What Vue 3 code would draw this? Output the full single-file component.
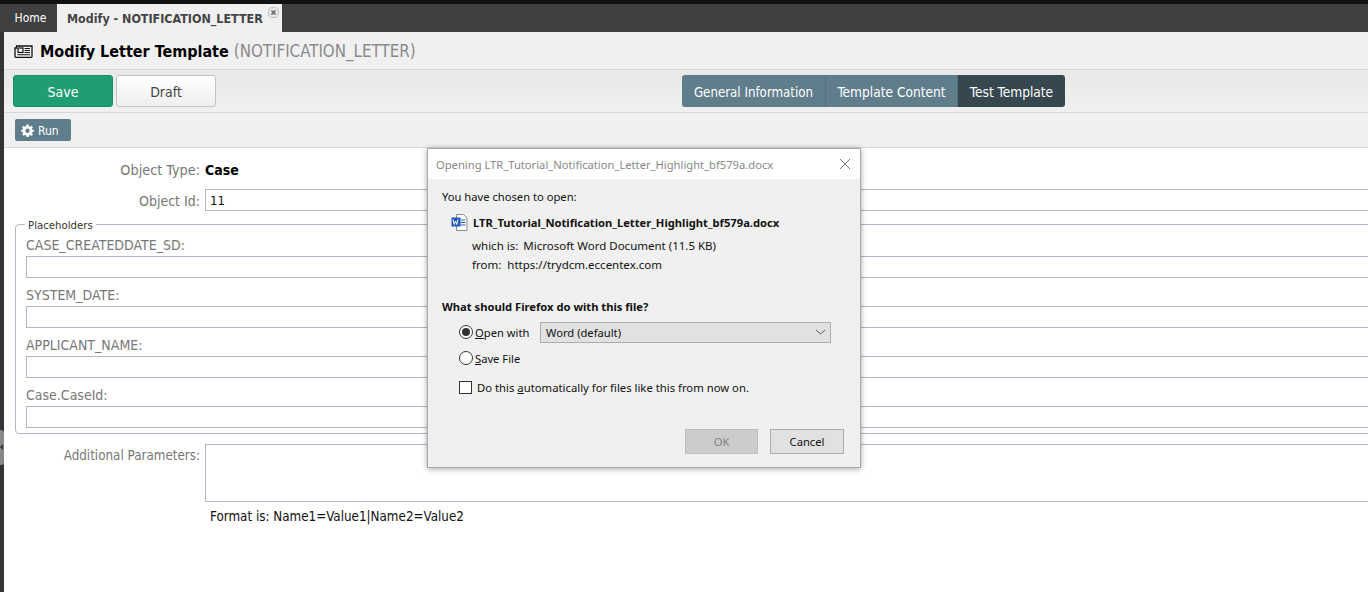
<template>
  <div class="page">
    <div class="tabs">
      <div class="tab home">Home</div>
      <div class="tab active">
        <span>Modify - NOTIFICATION_LETTER</span>
        <svg class="tab_close" width="11" height="11" viewBox="0 0 11 11">
          <rect x="0.5" y="0.5" width="10" height="10" rx="3" fill="#e4e4e4" stroke="#c4c4c4" />
          <path d="M3.500 3.500l4 4M7.500 3.500l-4 4" stroke="#666" stroke-width="1.500" />
        </svg>
      </div>
    </div>
    <div class="main">
      <div class="head">
        <svg class="head_icon" width="19" height="13" viewBox="0 0 19 13">
          <path d="M2.500 1h15.500v10.500a.8.8 0 0 1-.8.8H1.800a.8.8 0 0 1-.8-.8V3h1.500z" fill="#f4f4f4" stroke="#111" stroke-width="1.300" />
          <rect x="4" y="3" width="5" height="4.500" fill="none" stroke="#111" stroke-width="1.200" />
          <path d="M10.500 3.500h5.500M10.500 5.500h5.500M10.500 7.500h5.500M3.500 9.800h12.500" stroke="#111" stroke-width="1.100" />
        </svg>
        <span class="head_title">Modify Letter Template</span>
        <span class="head_sub">(NOTIFICATION_LETTER)</span>
      </div>
      <div class="toolbar">
        <div class="actions">
          <div class="btn save">Save</div>
          <div class="btn draft">Draft</div>
        </div>
        <div class="steps">
          <div class="step" style="width: 144px">General Information</div>
          <div class="step" style="width: 132px">Template Content</div>
          <div class="step current" style="width: 107px">Test Template</div>
        </div>
      </div>
      <div class="runbar">
        <div class="run">
          <svg width="13" height="13" viewBox="0 0 24 24">
            <path fill-rule="evenodd" fill="#fff" d="M10 1h4l.6 3.100 2 .8 2.600-1.800 2.800 2.800-1.800 2.600.8 2L24 11v3l-3 .6-.8 2 1.800 2.600-2.800 2.800-2.600-1.800-2 .8L14 24h-4l-.6-3.100-2-.8-2.600 1.800L2 19.100l1.800-2.600-.8-2L0 14v-3l3-.6.8-2L2 5.900 4.800 3.100l2.600 1.800 2-.8zM12 8.500a4 4 0 1 0 0 8 4 4 0 0 0 0-8z" />
          </svg>
          <span>Run</span>
        </div>
      </div>
      <div class="content">
        <div class="row type_row">
          <div class="label type_label">Object Type:</div>
          <div class="type_value">Case</div>
        </div>
        <div class="row">
          <div class="label id_label">Object Id:</div>
          <div class="input id_input">11</div>
        </div>
        <div class="fieldset">
          <div class="legend">Placeholders</div>
          <div v-for="name in placeholders" :key="name" class="field">
            <div class="field_label">{{ name }}:</div>
            <div class="input"></div>
          </div>
        </div>
        <div class="row params_row">
          <div class="label params_label">Additional Parameters:</div>
          <div class="params">
            <div class="input textarea"></div>
            <div class="hint">Format is: Name1=Value1|Name2=Value2</div>
          </div>
        </div>
      </div>
      <div class="splitter">
        <div class="grip"></div>
      </div>
    </div>

    <div class="dialog">
      <div class="dialog_title">
        <span>Opening LTR_Tutorial_Notification_Letter_Highlight_bf579a.docx</span>
        <svg width="12" height="12" viewBox="0 0 12 12">
          <path d="M1 1l10 10M11 1L1 11" stroke="#777" stroke-width="1" />
        </svg>
      </div>
      <div class="dialog_body">
        <div class="chosen">You have chosen to open:</div>
        <div class="file">
          <svg width="17" height="17" viewBox="0 0 17 17">
            <path d="M5.500 0.500h7l3.500 3.500v12.500h-10.500z" fill="#fff" stroke="#8a8a8a" />
            <path d="M9.500 6h5M9.500 8.500h5M9.500 11h5" stroke="#2b5cb8" stroke-width="1" />
            <rect x="0.500" y="3.500" width="9" height="9" fill="#1f56c0" />
            <path d="M2 5.500l1.200 5 1.300-3.500 1.300 3.500 1.200-5" fill="none" stroke="#fff" stroke-width="1" />
          </svg>
          <span>LTR_Tutorial_Notification_Letter_Highlight_bf579a.docx</span>
        </div>
        <div class="meta which"><span>which is:</span><span>Microsoft Word Document (11.5 KB)</span></div>
        <div class="meta from"><span>from:</span><span>https://trydcm.eccentex.com</span></div>
        <div class="question">What should Firefox do with this file?</div>
        <div class="option open">
          <span class="radio on"></span>
          <span class="option_text open_text"><u>O</u>pen with</span>
          <div class="select">
            <span>Word (default)</span>
            <svg width="11" height="6" viewBox="0 0 11 6">
              <path d="M1 1l4.500 4L10 1" fill="none" stroke="#555" stroke-width="1" />
            </svg>
          </div>
        </div>
        <div class="option save_file">
          <span class="radio"></span>
          <span class="option_text"><u>S</u>ave File</span>
        </div>
        <div class="option auto">
          <span class="check"></span>
          <span class="option_text">Do this <u>a</u>utomatically for files like this from now on.</span>
        </div>
        <div class="dialog_btns">
          <div class="dlg_btn disabled">OK</div>
          <div class="dlg_btn">Cancel</div>
        </div>
      </div>
    </div>
  </div>
</template>

<script setup>
const placeholders = ['CASE_CREATEDDATE_SD', 'SYSTEM_DATE', 'APPLICANT_NAME', 'Case.CaseId']
</script>

<style>
html, body {
  margin: 0;
  overflow: hidden;
  background: #fff;
}
</style>

<style scoped>
.page {
  position: relative;
  width: 1368px;
  height: 592px;
  overflow: hidden;
  box-sizing: border-box;
  padding-top: 4px;
  background: #111;
  font-family: "DejaVu Sans Condensed", "DejaVu Sans", sans-serif;
  font-size: 13px;
  color: #222;
}

.tabs {
  display: flex;
  height: 28px;
  padding-left: 4px;
  background: #404040;
}

.tab {
  display: flex;
  align-items: center;
  font-size: 12px;
}

.home {
  width: 53px;
  justify-content: center;
  color: #fff;
}

.active {
  position: relative;
  width: 225px;
  padding-left: 10px;
  box-sizing: border-box;
  background: #f0f0f0;
  color: #444;
  font-weight: bold;
  font-size: 12.4px;
}

.tab_close {
  position: absolute;
  top: 3px;
  right: 3px;
}

.main {
  position: relative;
  height: 560px;
  margin-left: 4px;
  background: #fff;
}

.head {
  display: flex;
  align-items: center;
  height: 38px;
  box-sizing: border-box;
  padding-left: 10px;
  padding-top: 1px;
  background: #f0f0f0;
  border-bottom: 1px solid #d8d8d8;
}

.head_icon {
  margin-right: 7px;
}

.head_title {
  font-size: 16px;
  font-weight: bold;
  color: #000;
}

.head_sub {
  margin-left: 5px;
  font-size: 16.800px;
  color: #8a8a8a;
}

.toolbar {
  display: flex;
  align-items: center;
  justify-content: space-between;
  height: 43px;
  box-sizing: border-box;
  padding: 0 303px 0 9px;
  background: linear-gradient(#e8e8e8, #f0f0f0);
  border-bottom: 1px solid #d8d8d8;
}

.actions {
  display: flex;
  gap: 3px;
}

.btn {
  display: flex;
  align-items: center;
  justify-content: center;
  width: 100px;
  height: 32px;
  box-sizing: border-box;
  padding-top: 1px;
  border-radius: 3px;
  font-size: 14px;
}

.save {
  background: #1f9d73;
  border: 1px solid #1b8e68;
  color: #fff;
}

.draft {
  background: linear-gradient(#fff, #efefef);
  border: 1px solid #c4c4c4;
  color: #444;
}

.steps {
  display: flex;
  height: 32px;
  border-radius: 3px;
  overflow: hidden;
}

.step {
  display: flex;
  align-items: center;
  justify-content: center;
  box-sizing: border-box;
  padding-top: 1px;
  background: #607d8b;
  border-right: 1px solid #54707e;
  color: #fff;
  font-size: 13.600px;
}

.step:first-child {
  padding-top: 2px;
  font-size: 13.200px;
}

.current {
  background: #37474f;
  border-right: none;
}

.runbar {
  height: 35px;
  box-sizing: border-box;
  padding: 6px 0 0 11px;
  background: #f0f0f0;
  border-bottom: 1px solid #d8d8d8;
}

.run {
  display: flex;
  align-items: center;
  gap: 4px;
  width: 56px;
  height: 22px;
  box-sizing: border-box;
  padding-left: 6px;
  padding-top: 1px;
  background: #607d8b;
  border-radius: 2px;
  color: #fff;
  font-size: 12px;
}

.content {
  width: 1500px;
  padding-top: 10px;
}

.row {
  display: flex;
  align-items: center;
  height: 32px;
}

.type_row {
  height: 24px;
  margin-bottom: 2px;
}

.label {
  width: 196px;
  margin-right: 5px;
  text-align: right;
  color: #777;
  font-size: 14px;
}

.type_label {
  font-size: 14.300px;
}

.id_label {
  padding-top: 2px;
}

.params_label {
  font-size: 13.300px;
}

.type_value {
  font-size: 14px;
  font-weight: bold;
  color: #000;
}

.input {
  flex: 1;
  height: 22px;
  box-sizing: border-box;
  background: #fff;
  border: 1px solid #b5b5c8;
}

.id_input {
  padding-left: 4px;
  line-height: 21px;
  color: #111;
  font-size: 13px;
}

.fieldset {
  position: relative;
  margin: 8px 0 0 11px;
  padding: 9px 0 0 10px;
  height: 210px;
  box-sizing: border-box;
  border: 1px solid #b5b5c8;
  border-radius: 4px;
}

.legend {
  position: absolute;
  top: -6px;
  left: 9px;
  padding: 0 3px;
  background: #fff;
  font-size: 11.300px;
  color: #333;
}

.field {
  height: 50px;
}

.field_label {
  height: 22px;
  line-height: 22px;
  color: #777;
  font-size: 14px;
}

.params_row {
  align-items: flex-start;
  height: auto;
  margin-top: 10px;
}

.params_row .label {
  margin-top: 4px;
}

.params {
  flex: 1;
}

.textarea {
  height: 58px;
}

.hint {
  margin: 7px 0 0 5px;
  font-size: 13.300px;
  color: #111;
}

.splitter {
  position: absolute;
  top: 0;
  left: -4px;
  width: 4px;
  height: 560px;
  background: #333;
}

.grip {
  position: absolute;
  top: 398px;
  left: 0;
  width: 4px;
  height: 35px;
  background: #888;
  border-radius: 0 3px 3px 0;
}

.grip::after {
  content: "";
  position: absolute;
  top: 14px;
  left: 0;
  border: 3px solid transparent;
  border-right-color: #333;
  border-left-width: 0;
}

.dialog {
  position: absolute;
  top: 148px;
  left: 427px;
  width: 434px;
  height: 320px;
  box-sizing: border-box;
  background: #f0f0f0;
  border: 1px solid #a8a8a8;
  box-shadow: 0 1px 6px rgba(0, 0, 0, 0.35);
  font-family: "Noto Sans", sans-serif;
  font-size: 11.200px;
  color: #111;
}

.dialog_title {
  display: flex;
  align-items: center;
  justify-content: space-between;
  height: 30px;
  padding: 0 9px 0 8px;
  background: #fff;
  color: #888;
}

.dialog_body {
  padding: 0 14px;
}

.chosen {
  margin-top: 10px;
  line-height: 16px;
}

.file {
  display: flex;
  align-items: center;
  gap: 5px;
  height: 18px;
  margin: 8px 0 0 9px;
  font-weight: bold;
}

.meta {
  display: flex;
  height: 19px;
  margin-left: 30px;
  align-items: center;
  font-size: 11.500px;
}

.which {
  margin-top: 5px;
  gap: 5px;
}

.from {
  gap: 6px;
}

.question {
  margin-top: 25px;
  font-weight: bold;
  line-height: 16px;
}

.option {
  display: flex;
  align-items: center;
  margin-left: 17px;
}

.open {
  height: 22px;
  margin-top: 6px;
}

.save_file {
  margin-top: 4px;
  height: 22px;
}

.auto {
  margin-top: 7px;
  height: 22px;
  font-size: 11.300px;
}

.radio {
  position: relative;
  width: 12px;
  height: 12px;
  border: 1px solid #333;
  border-radius: 50%;
  background: #fff;
  margin-right: 2px;
}

.radio.on::after {
  content: "";
  position: absolute;
  inset: 2px;
  border-radius: 50%;
  background: #333;
}

.check {
  width: 11px;
  height: 11px;
  border: 1px solid #333;
  background: #fff;
  margin-right: 5px;
}

.open_text {
  width: 55px;
  white-space: nowrap;
}

.select {
  display: flex;
  align-items: center;
  justify-content: space-between;
  width: 291px;
  height: 21px;
  box-sizing: border-box;
  margin-left: 10px;
  padding: 0 4px 0 5px;
  background: #e1e1e1;
  border: 1px solid #adadad;
}

.dialog_btns {
  display: flex;
  justify-content: flex-end;
  gap: 12px;
  margin: 31px 2px 0 0;
}

.dlg_btn {
  display: flex;
  align-items: center;
  justify-content: center;
  width: 74px;
  height: 25px;
  box-sizing: border-box;
  background: #e1e1e1;
  border: 1px solid #adadad;
}

.disabled {
  width: 73px;
  background: #ccc;
  border-color: #bfbfbf;
  color: #838383;
}
</style>
